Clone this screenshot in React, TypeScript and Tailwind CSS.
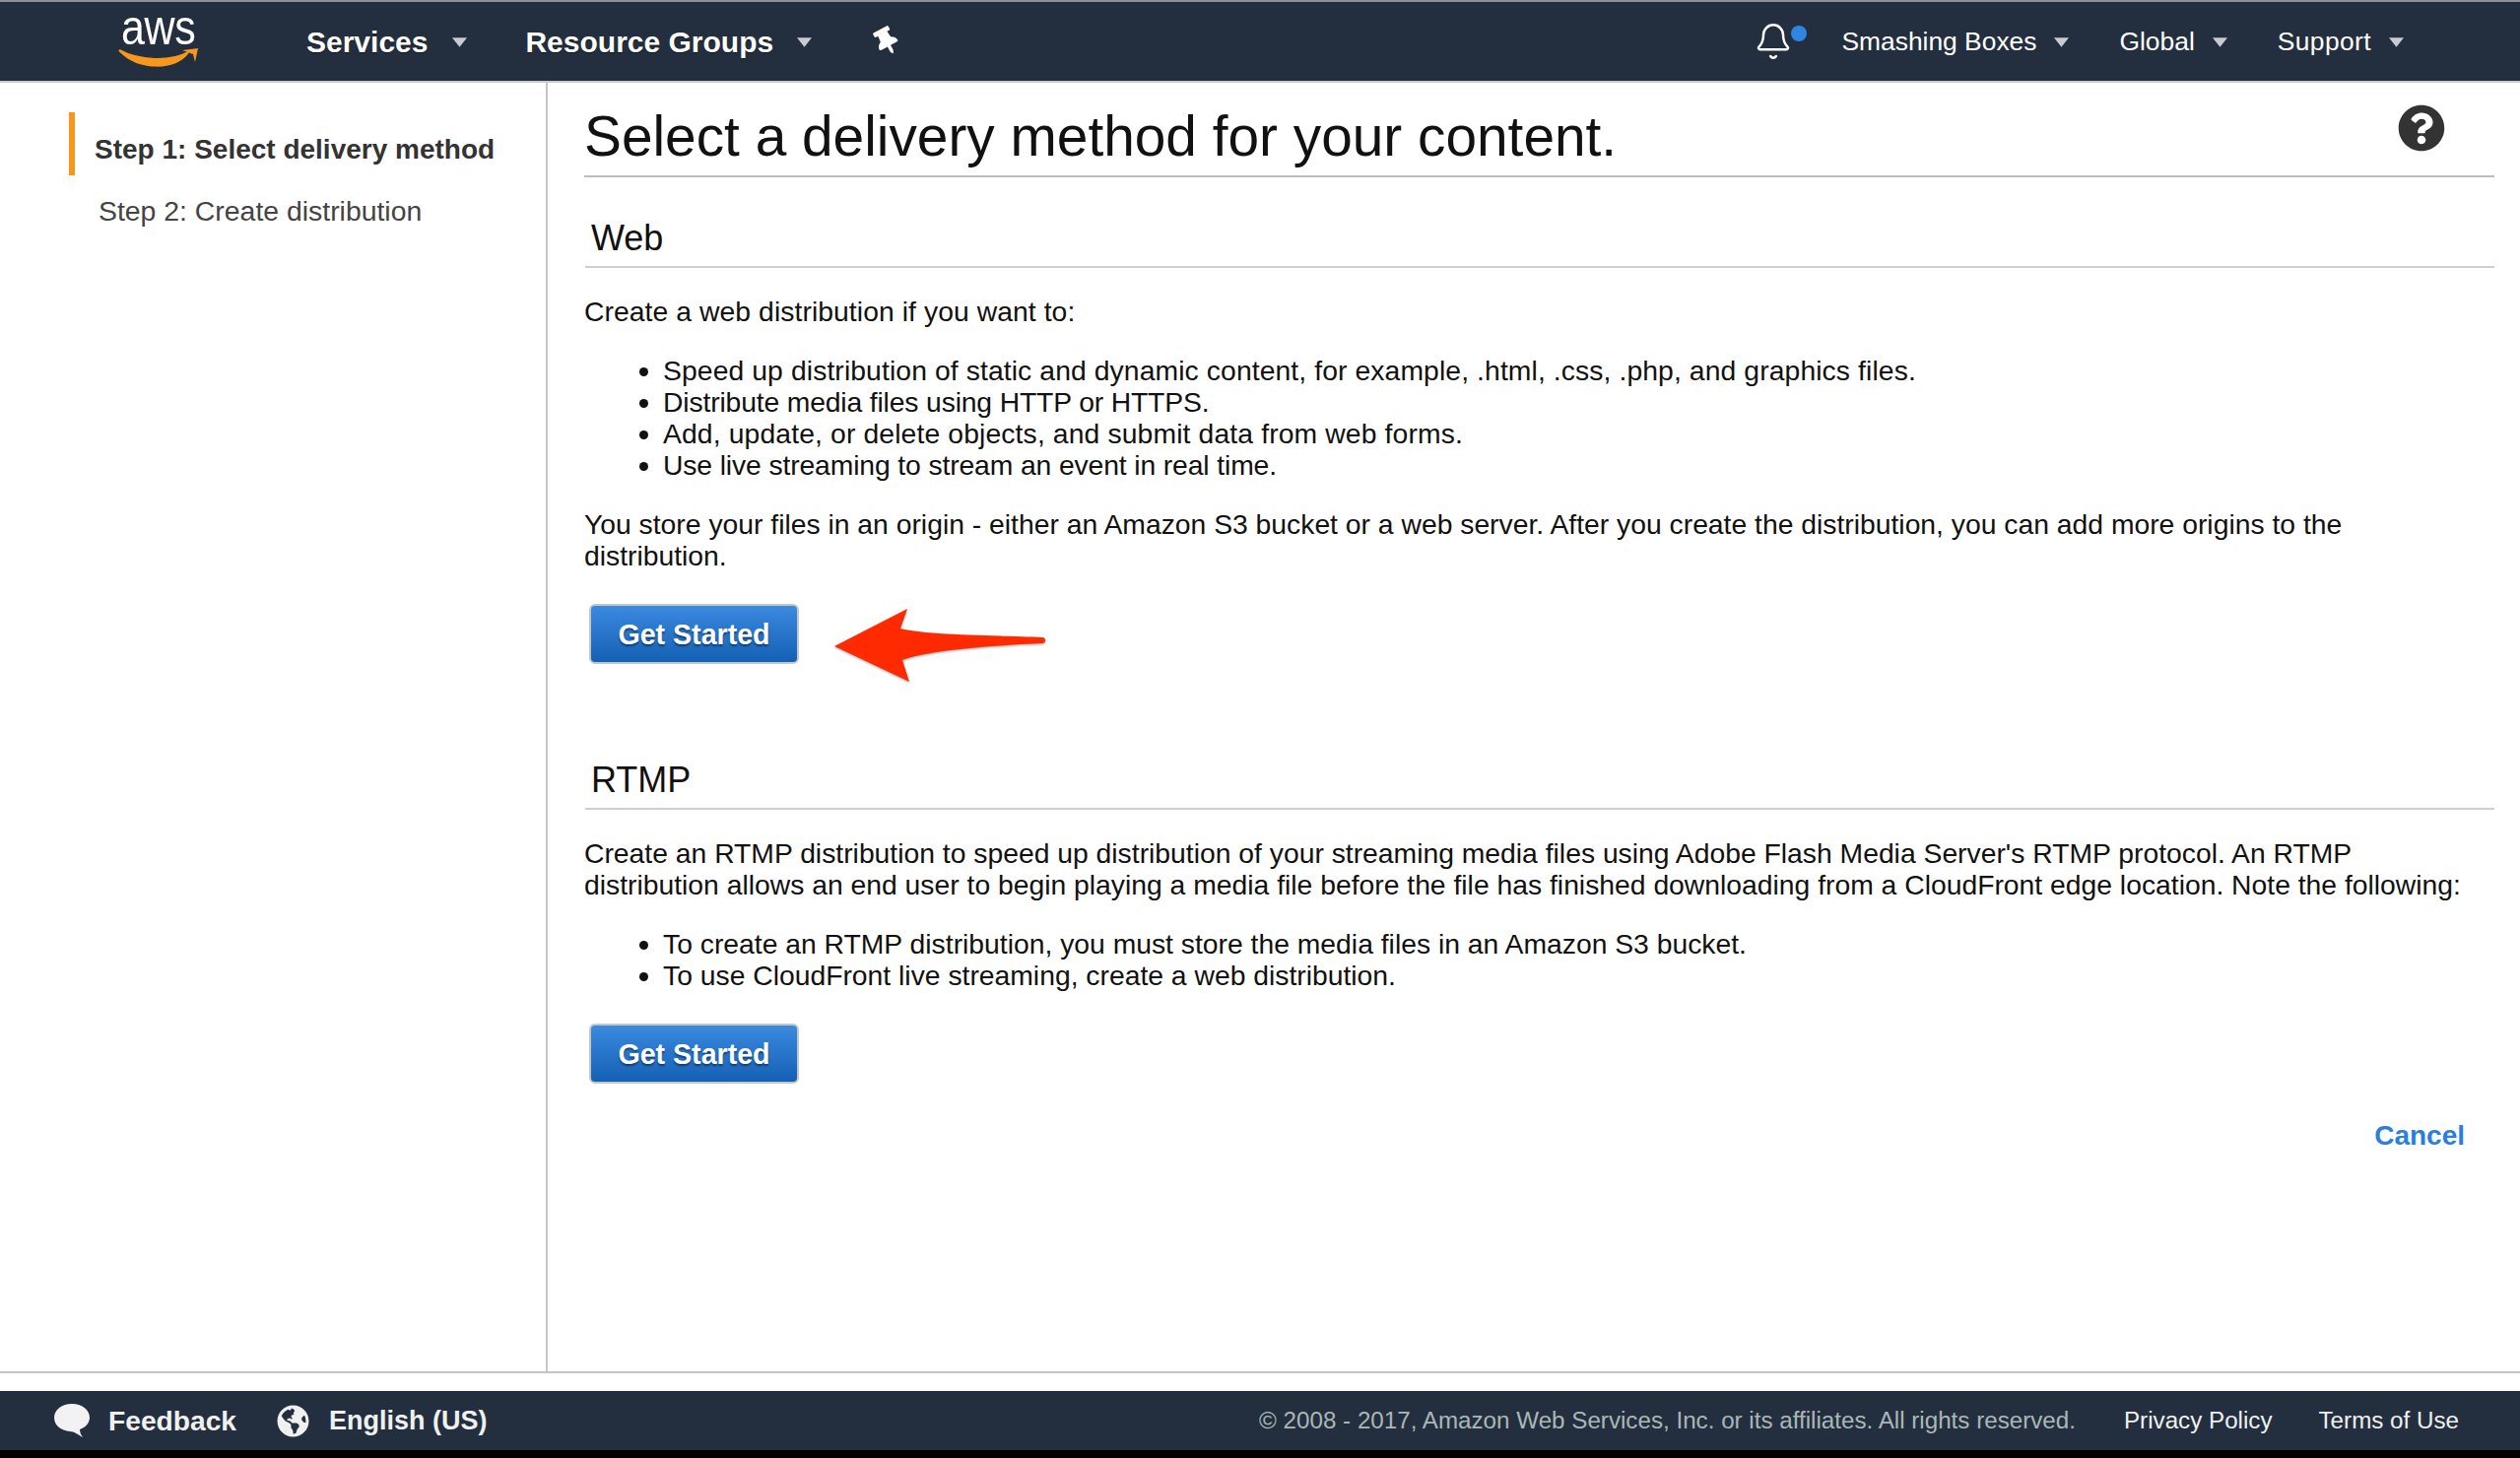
import React from 'react';
import { Bell } from 'lucide-react';
import { FaGlobeAmericas, FaQuestionCircle, FaThumbtack } from 'react-icons/fa';

function Caret({ className = '' }: { className?: string }) {
  return (
    <svg viewBox="0 0 16 10" className={`h-[10px] w-[15px] ${className}`}>
      <path d="M0 0h16L8 10z" fill="#c8ccd0" />
    </svg>
  );
}

function AwsLogo() {
  return (
    <div className="flex h-[56px] w-[84px] flex-col items-center">
      <span className="-mt-[8px] h-[44px] scale-x-[0.86] text-[50px] leading-[44px] tracking-[-0.5px] text-white">aws</span>
      <svg viewBox="0 0 84 20" className="-mt-[2px] h-[20px] w-[84px]">
        <path d="M2 3C22 14 54 15 72 5C60 23 22 24 2 3z" fill="#f7981d" stroke="#f7981d" strokeWidth="2" />
        <path d="M66 3l16-2-3 14-2-8z" fill="#f7981d" />
      </svg>
    </div>
  );
}

function GetStarted() {
  return (
    <button className="h-[61px] w-[213px] rounded-[6px] border-2 border-[#c4c7ca] bg-gradient-to-b from-[#3a8ae0] to-[#1360b4] text-[28.6px] font-bold text-white [text-shadow:0_2px_2px_rgba(0,0,0,0.45)]">
      Get Started
    </button>
  );
}

function SectionTitle({ children }: { children: React.ReactNode }) {
  return (
    <div className="border-b-2 border-[#cfcfcf] pb-[7px] pl-[6px] text-[36px] leading-[42px] text-[#111]">{children}</div>
  );
}

export default function App() {
  return (
    <div className="flex h-[1480px] w-[2558px] flex-col overflow-hidden bg-white font-['Liberation_Sans',Arial,sans-serif] text-[#111]">
      <div className="h-[2px] bg-[#8d9196]" />
      <header className="flex h-[82px] items-center border-b-2 border-[#c9c9c9] bg-[#232f3e] text-white">
        <div className="ml-[119px] mr-[108px]">
          <AwsLogo />
        </div>
        <span className="text-[30px] font-bold [text-shadow:0_1px_1px_rgba(0,0,0,0.5)]">Services</span>
        <Caret className="mt-[2px] ml-[25px] mr-[59px]" />
        <span className="text-[30px] font-bold [text-shadow:0_1px_1px_rgba(0,0,0,0.5)]">Resource Groups</span>
        <Caret className="mt-[2px] ml-[24px] mr-[64px]" />
        <FaThumbtack className="h-[28px] w-[24px] -rotate-[28deg] text-white" />
        <div className="ml-auto flex items-center pt-[2px] text-[26.4px]">
          <div className="relative -mt-[2px] mr-[35px] h-[40px] w-[54px]">
            <Bell className="h-[40px] w-[40px]" strokeWidth={1.5} />
            <span className="absolute top-[4px] right-0 h-[16px] w-[16px] rounded-full bg-[#2f86e0]" />
          </div>
          <span>Smashing Boxes</span>
          <Caret className="ml-[18px] mr-[51px]" />
          <span>Global</span>
          <Caret className="ml-[18px] mr-[51px]" />
          <span className="tracking-[0.4px]">Support</span>
          <Caret className="ml-[18px] mr-[118px]" />
        </div>
      </header>

      <main className="flex flex-1">
        <aside className="w-[556px] border-r-2 border-[#c4c4c4] pt-[30px]">
          <div className="ml-[70px] flex h-[64px] items-center border-l-[6px] border-[#f7981d] pt-[12px] pl-[20px] text-[28px] font-bold text-[#333]">
            Step 1: Select delivery method
          </div>
          <div className="mt-[19px] ml-[100px] text-[28.4px] leading-[34px] text-[#444]">Step 2: Create distribution</div>
        </aside>

        <section className="relative flex-1 pt-[22px] pr-[26px] pl-[37px] text-[28.3px] leading-[32px]">
          <h1 className="border-b-2 border-[#bdbdbd] pb-[6px] text-[56.8px] leading-[66px] text-[#111]">
            Select a delivery method for your content.
          </h1>
          <FaQuestionCircle className="absolute top-[22px] right-[76px] h-[48px] w-[48px] text-[#333]" />

          <div className="mt-[41px] ml-[1px]">
            <SectionTitle>Web</SectionTitle>
          </div>
          <p className="mt-[28px] tracking-[0.07px]">Create a web distribution if you want to:</p>
          <ul className="mt-[28px] list-disc pl-[80px]">
            <li className="tracking-[0.1px]">Speed up distribution of static and dynamic content, for example, .html, .css, .php, and graphics files.</li>
            <li className="-tracking-[0.15px]">Distribute media files using HTTP or HTTPS.</li>
            <li className="tracking-[0.13px]">Add, update, or delete objects, and submit data from web forms.</li>
            <li className="-tracking-[0.12px]">Use live streaming to stream an event in real time.</li>
          </ul>
          <p className="mt-[28px] pr-[60px]">
            You store your files in an origin - either an Amazon S3 bucket or a web server. After you create the distribution, you can add more origins to the distribution.
          </p>
          <div className="relative mt-[33px] ml-[5px]">
            <GetStarted />
            <svg viewBox="0 0 220 80" className="absolute top-[4px] left-[248px] h-[80px] w-[220px] drop-shadow-[0_1px_1px_rgba(0,0,0,0.35)]">
              <path d="M1 39L75 1L68 21C95 28 170 28 212 30a3 3 0 0 1 0 6C170 38 100 42 70 53L77 75z" fill="#ff2a00" />
            </svg>
          </div>

          <div className="mt-[97px] ml-[1px]">
            <SectionTitle>RTMP</SectionTitle>
          </div>
          <p className="mt-[28px] whitespace-pre-line">
            {"Create an RTMP distribution to speed up distribution of your streaming media files using Adobe Flash Media Server's RTMP protocol. An RTMP\ndistribution allows an end user to begin playing a media file before the file has finished downloading from a CloudFront edge location. Note the following:"}
          </p>
          <ul className="mt-[28px] list-disc pl-[80px]">
            <li>To create an RTMP distribution, you must store the media files in an Amazon S3 bucket.</li>
            <li>To use CloudFront live streaming, create a web distribution.</li>
          </ul>
          <div className="mt-[33px] ml-[5px]">
            <GetStarted />
          </div>
          <div className="mt-[37px] pr-[30px] text-right text-[28px] font-bold text-[#2a7fdc]">Cancel</div>
        </section>
      </main>

      <div className="mb-[18px] h-[2px] bg-[#c4c4c4]" />
      <footer className="flex h-[60px] items-center bg-[#232f3e] text-[#f0f0f0]">
        <svg viewBox="0 0 36 34" className="ml-[55px] h-[34px] w-[36px]">
          <path d="M18 0C8 0 0 6 0 14c0 8 7 13 16 14 4 0 8 3 13 6-2-3-3-5-3-8 6-2 10-7 10-12C36 6 28 0 18 0z" fill="#f2f2f2" />
        </svg>
        <span className="ml-[19px] text-[28.2px] font-bold">Feedback</span>
        <FaGlobeAmericas className="ml-[41px] h-[33px] w-[33px]" />
        <span className="ml-[20px] text-[27px] font-bold">English (US)</span>
        <div className="ml-auto flex items-center text-[24.2px]">
          <span className="text-[#aab7b8]">© 2008 - 2017, Amazon Web Services, Inc. or its affiliates. All rights reserved.</span>
          <span className="ml-[49px]">Privacy Policy</span>
          <span className="mr-[62px] ml-[47px]">Terms of Use</span>
        </div>
      </footer>
      <div className="h-[8px] bg-black" />
    </div>
  );
}
